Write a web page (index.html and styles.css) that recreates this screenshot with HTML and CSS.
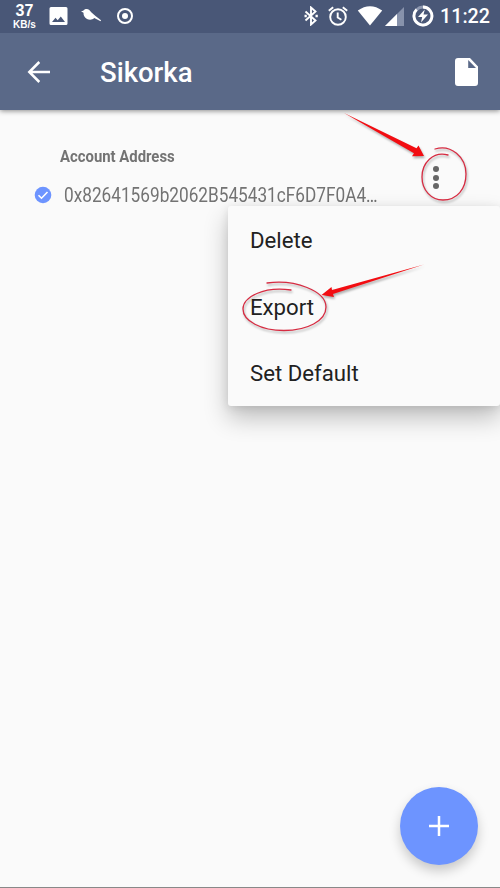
FILE: index.html
```html
<!DOCTYPE html>
<html lang="en">
<head>
<meta charset="utf-8">
<title>Sikorka</title>
<link rel="stylesheet" href="styles.css">
</head>
<body>
<div class="screen">
  <header class="top">
    <div class="status">
      <div class="speed"><span class="speed-num">37</span><span class="speed-unit">KB/s</span></div>
      <svg class="i-photo" width="19" height="20" viewBox="0 0 19 20"><path fill="#fff" fill-rule="evenodd" d="M2 1h15q1.500 0 1.500 1.500v15q0 1.500-1.500 1.500H2Q.5 19 .5 17.500v-15Q.5 1 2 1zM3 16h13l-4.200-5.500-3.100 3.800-2.200-2.500z"/></svg>
      <svg class="i-bird" width="22" height="16" viewBox="0 0 22 16"><path fill="#fff" d="M0 3.300L2.300 2.800C3.200 1 6.500.5 8.300 2L10.500 4.500 14.500 8 20 12.300l-.4.900-6.300-3.100C11.500 11.800 8.500 12.200 6 11 3.500 9.600 2.400 7.500 2.500 4.800z"/></svg>
      <svg class="i-ring" width="18" height="18" viewBox="0 0 18 18"><circle cx="9" cy="9" r="7" fill="none" stroke="#fff" stroke-width="2"/><circle cx="9" cy="9" r="3" fill="#fff"/></svg>
      <div class="status-right">
        <svg width="14" height="20" viewBox="0 0 14 20"><path d="M1.500 5.500l10 9L7 18.500v-17l4.500 4-10 9" fill="none" stroke="#fff" stroke-width="1.900"/><path d="M.5 8.700h2.300v2.600H.5zM11.500 8.700h2.300v2.600h-2.300z" fill="#fff"/></svg>
        <svg class="i-alarm" width="20" height="20" viewBox="0 0 20 20"><g fill="none" stroke="#fff" stroke-width="1.900"><circle cx="10" cy="11" r="7.800"/><path d="M9.700 6.500V11.500l3.700 2.200M.8 4.800L5.200 1.200M14.800 1.200L19.200 4.800"/></g></svg>
        <svg class="i-wifi" width="26" height="20" viewBox="0 0 26 20"><path fill="#fff" d="M.8 4.500Q13-4 25.200 4.500L13 19.500z"/></svg>
        <svg class="i-signal" width="19" height="19" viewBox="0 0 19 19"><path fill="#8792ab" d="M19 0v19H0z"/><path fill="#fff" d="M12 7v12H0z"/></svg>
        <svg class="i-battery" width="22" height="22" viewBox="0 0 22 22"><circle cx="11" cy="11" r="9" fill="none" stroke="#8f99b1" stroke-width="2.800"/><path d="M11 2A9 9 0 1 1 4.600 4.600" fill="none" stroke="#fff" stroke-width="2.800"/><path fill="#fff" d="M12.800 4.500L6 12h4.200l-1.200 5.500 7-8h-4.500z"/></svg>
        <span class="clock">11:22</span>
      </div>
    </div>
    <div class="bar">
      <svg class="back" width="24" height="24" viewBox="0 0 24 24"><path d="M23 12H2.500M12.300 2L2.300 12l10 10" fill="none" stroke="#fff" stroke-width="2.500"/></svg>
      <h1>Sikorka</h1>
      <svg class="doc" width="24" height="28" viewBox="0 0 24 28"><path fill="#fff" fill-rule="evenodd" d="M3 0h12l8 8.500V25q0 3-3 3H3q-3 0-3-3V3q0-3 3-3zM13.200 2v8h7.800z"/></svg>
    </div>
  </header>
  <main class="account">
    <div class="label"><span>Account Address</span></div>
    <div class="row">
      <svg width="18" height="18" viewBox="0 0 18 18"><circle cx="9" cy="9" r="8.300" fill="#6d94ff"/><path d="M4.500 9.200l3 3 6-6.200" fill="none" stroke="#fff" stroke-width="1.600"/></svg>
      <span class="address">0x82641569b2062B545431cF6D7F0A4…</span>
    </div>
  </main>
  <div class="dots"><i></i><i></i><i></i></div>
  <div class="menu">
    <div class="item">Delete</div>
    <div class="item">Export</div>
    <div class="item">Set Default</div>
  </div>
  <button class="fab" aria-label="Add"><svg width="22" height="22" viewBox="0 0 22 22"><path d="M11 1v20M1 11h20" stroke="#fff" stroke-width="2.500"/></svg></button>
  <svg class="marks" width="500" height="888" viewBox="0 0 500 888">
    <g fill="#f20d12">
      <path d="M344 113L416.500 148.300 418.500 145.500 424 156 412 156.300 414 153.300z"/>
      <path d="M424 264.500L333 294 334 297 321.500 295 331.500 287 332 290z"/>
    </g>
    <g fill="none" stroke="#d62c42" stroke-width="1.300" stroke-linecap="round">
      <path d="M435 149C451 144 466 157 466 174C466 189 457 200 443 200C431 200 422 190 422 177C422 163 433 151 448 155"/>
      <path d="M267 283C295 279 326 291 326 307C326 321 307 330.500 284 330.500C261 330.500 243 321 243 309C243 297 264 286 291 290"/>
    </g>
  </svg>
</div>
</body>
</html>
```

FILE: styles.css
```css
* { box-sizing: border-box; }
body { margin: 0; font-family: Roboto, "Liberation Sans", sans-serif; background: #fafafa; }
svg { display: block; flex: none; }
.screen { position: relative; width: 500px; height: 888px; overflow: hidden; background: #fafafa; border-bottom: 1px solid #888; }
.top { height: 110px; background: #5a6988; color: #fff; box-shadow: 0 1px 5px rgba(0,0,0,.45); }
.status { height: 33px; background: #495777; display: flex; align-items: flex-start; padding-left: 12px; }
.speed { width: 25px; padding-top: 3px; display: flex; flex-direction: column; align-items: center; font-family: "Liberation Sans", sans-serif; font-weight: bold; }
.speed-num { font-size: 16px; line-height: 16px; }
.speed-unit { font-size: 10px; line-height: 10px; margin-top: 1px; }
.i-photo { margin: 6px 0 0 12px; }
.i-bird { margin: 8px 0 0 13px; }
.i-ring { margin: 7px 0 0 13px; }
.status-right { margin-left: auto; padding: 6px 11px 0 0; display: flex; align-items: flex-start; }
.i-alarm { margin-left: 10px; }
.i-wifi { margin-left: 9px; }
.i-signal { margin: 1px 0 0 2px; }
.i-battery { margin: -1px 6px 0 8px; }
.clock { font-size: 19.700px; line-height: 22px; font-weight: 500; width: 49px; white-space: nowrap; }
.bar { height: 77px; display: flex; align-items: center; padding: 0 21px 0 27px; }
h1 { margin: 2px auto 0 49px; font-size: 27.500px; line-height: 34px; font-weight: 500; }
.account { padding: 37px 0 0 34px; color: #737373; }
.label { height: 19px; line-height: 19px; padding-left: 26px; font-size: 16px; font-weight: 700; }
.label span { display: inline-block; transform: scaleX(.93); transform-origin: left; }
.row { display: flex; align-items: center; height: 24px; margin-top: 17px; }
.address { margin-left: 12px; padding-top: 1px; font-size: 19.500px; line-height: 24px; white-space: nowrap; transform: scaleX(.883); transform-origin: left; }
.dots { position: absolute; left: 433px; top: 166px; display: grid; gap: 2.500px; }
.dots i { width: 6px; height: 6px; border-radius: 50%; background: #666; }
.menu { position: absolute; left: 228px; top: 206px; width: 272px; height: 200px; border-radius: 3px; background: #fafafa; box-shadow: 0 12px 25px rgba(0,0,0,.24), 0 2px 10px rgba(0,0,0,.1); }
.item { height: 66.500px; line-height: 68px; padding-left: 22px; font-size: 22.200px; color: #212121; }
.fab { position: absolute; left: 400px; top: 787px; width: 78px; height: 78px; border: 0; padding: 0; border-radius: 50%; background: #6d94ff; display: grid; place-items: center; box-shadow: 0 6px 12px rgba(0,0,0,.2); }
.marks { position: absolute; inset: 0; filter: drop-shadow(1px 2px 1px rgba(0,0,0,.3)); pointer-events: none; }
```
